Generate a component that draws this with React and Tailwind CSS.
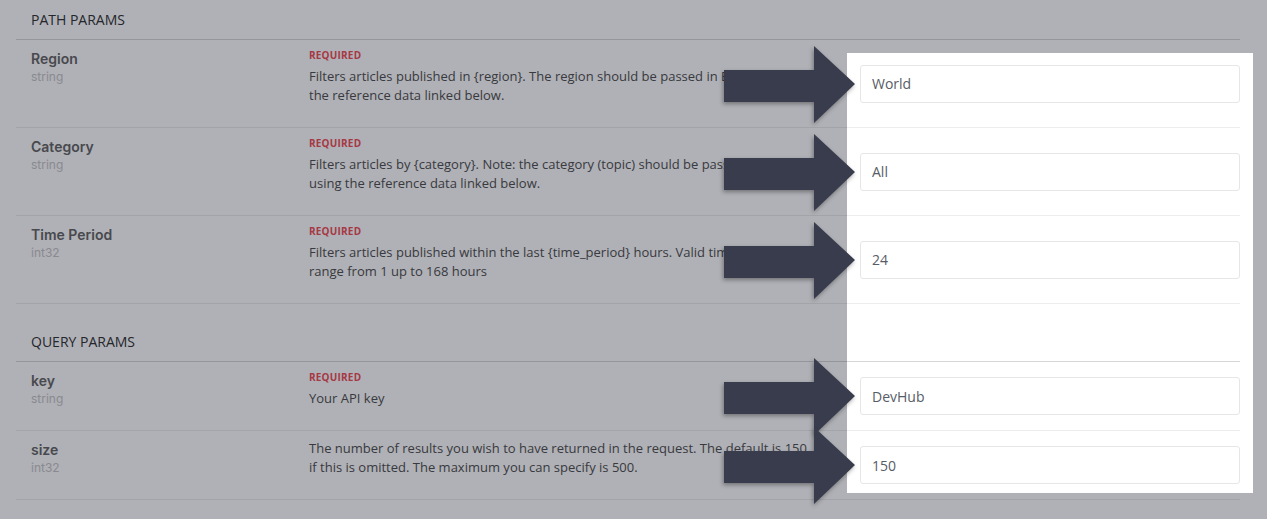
const PATH_PARAMS = [
  {
    name: 'Region',
    type: 'string',
    required: true,
    lines: ['Filters articles published in {region}. The region should be passed in English per', 'the reference data linked below.'],
    value: 'World',
  },
  {
    name: 'Category',
    type: 'string',
    required: true,
    lines: ['Filters articles by {category}. Note: the category (topic) should be passed in English', 'using the reference data linked below.'],
    value: 'All',
  },
  {
    name: 'Time Period',
    type: 'int32',
    required: true,
    lines: ['Filters articles published within the last {time_period} hours. Valid time periods', 'range from 1 up to 168 hours'],
    value: '24',
  },
]

const QUERY_PARAMS = [
  { name: 'key', type: 'string', required: true, lines: ['Your API key'], value: 'DevHub' },
  {
    name: 'size',
    type: 'int32',
    required: false,
    lines: ['The number of results you wish to have returned in the request. The default is 150', 'if this is omitted. The maximum you can specify is 500.'],
    value: '150',
  },
]

// Callout arrow pointing right at the input it sits beside.
function Arrow() {
  return (
    <svg
      width="132"
      height="80"
      viewBox="0 0 132 80"
      className="pointer-events-none absolute right-full top-1/2 z-20 mr-[4px] -translate-y-1/2 drop-shadow-[-1px_2px_2px_rgba(0,0,0,0.35)]"
    >
      <polygon points="0,26 90,26 90,2 131,40 90,79 90,58 0,58" fill="#383c4c" />
    </svg>
  )
}

function ParamRow({ param }) {
  return (
    <div className="flex border-b border-[#ececec] pl-[15px]">
      <div className="w-[278px] shrink-0 pb-[22px] pt-[9px] font-['Inter',sans-serif]">
        <div className="text-[14px] font-semibold leading-5 text-[#666]">{param.name}</div>
        <div className="text-[12px] leading-4 text-[#c6c6c6]">{param.type}</div>
      </div>
      <div className="w-[520px] shrink-0 pb-[22px] pt-2 font-['Open_Sans',sans-serif]">
        {param.required && (
          <div className="mb-[5px] text-[10px] font-bold leading-[14px] tracking-[0.2px] text-[#f04e57]">REQUIRED</div>
        )}
        <p className="whitespace-nowrap text-[13px] leading-[19px] text-[#505050]">
          {param.lines.map((line, i) => (
            <span key={i} className="block">
              {line}
            </span>
          ))}
        </p>
      </div>
      <div className="relative ml-auto w-[380px] shrink-0 self-center">
        <Arrow />
        <input
          readOnly
          value={param.value}
          className="block h-[38px] w-full rounded-[3px] border border-[#e6e6e6] bg-white px-[11px] font-['Open_Sans',sans-serif] text-[14px] text-[#585c66] outline-none"
        />
      </div>
    </div>
  )
}

function Section({ title, params, className = '' }) {
  return (
    <section className={className}>
      <h3 className="border-b border-[#d6d6d6] pb-[10px] pl-[15px] pt-[11px] font-['Open_Sans',sans-serif] text-[14px] leading-[18px] text-[#333]">
        {title}
      </h3>
      {params.map((p) => (
        <ParamRow key={p.name} param={p} />
      ))}
    </section>
  )
}

export default function App() {
  return (
    <div className="relative h-[519px] w-full overflow-hidden bg-white">
      <div className="ml-4 w-[1224px]">
        <Section title="PATH PARAMS" params={PATH_PARAMS} />
        <Section title="QUERY PARAMS" params={QUERY_PARAMS} className="mt-[18px]" />
      </div>
      {/* spotlight: dims everything except the inputs panel */}
      <div className="pointer-events-none absolute left-[847px] top-[53px] z-10 h-[440px] w-[406px] shadow-[0_0_0_2000px_rgba(8,11,27,0.32)]" />
    </div>
  )
}
